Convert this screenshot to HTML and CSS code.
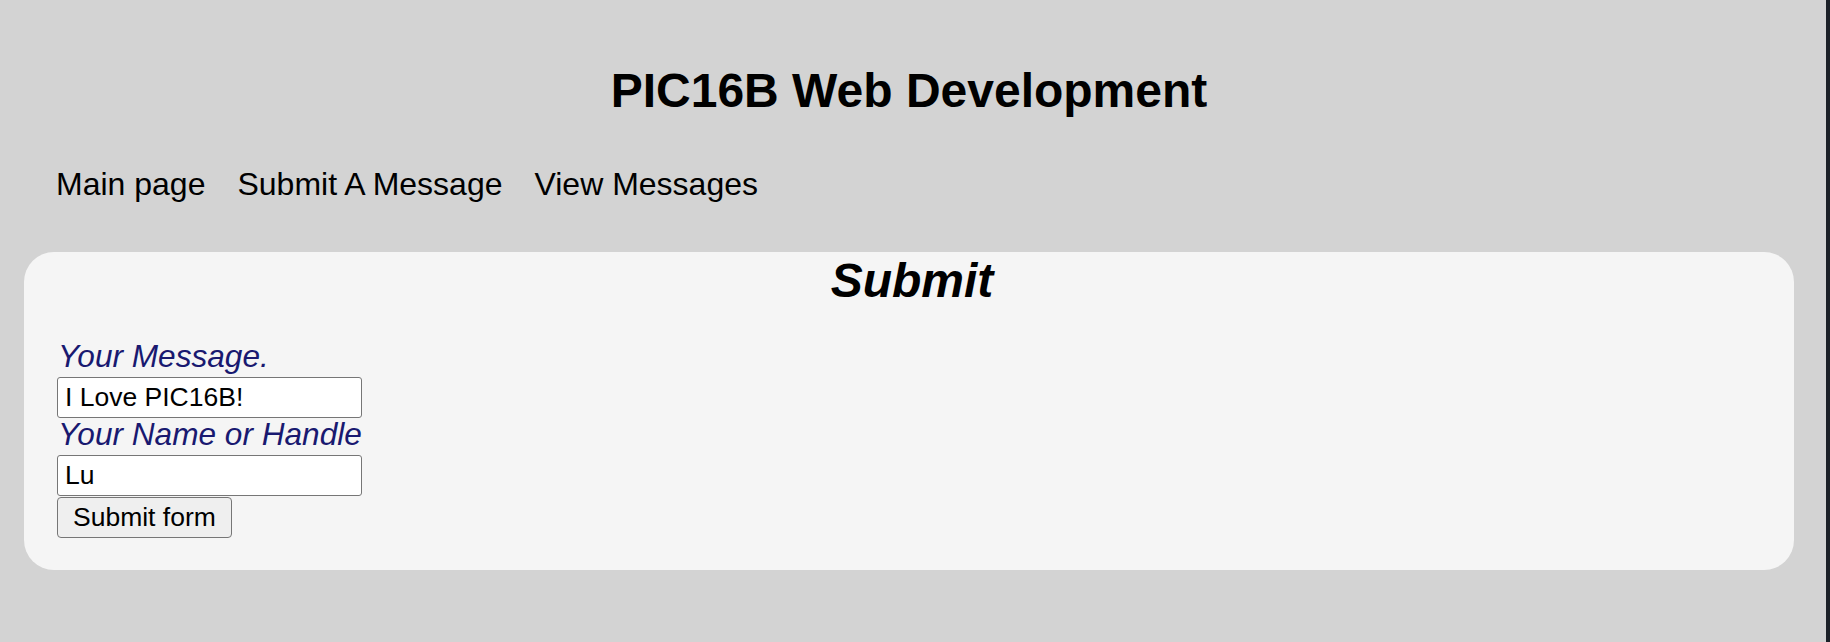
FILE: index.html
```html
<!DOCTYPE html>
<html lang="en">
<head>
<meta charset="utf-8">
<title>PIC16B Web Development</title>
<link rel="stylesheet" href="styles.css">
</head>
<body>
<main class="page">
  <h1 class="site-title">PIC16B Web Development</h1>
  <nav class="nav">
    <a class="nav-link" href="#">Main page</a>
    <a class="nav-link" href="#">Submit A Message</a>
    <a class="nav-link" href="#">View Messages</a>
  </nav>
  <section class="card">
    <h2 class="card-title">Submit</h2>
    <form class="form">
      <label class="field-label" for="message">Your Message.</label>
      <input class="text-input" id="message" type="text" value="I Love PIC16B!">
      <label class="field-label" for="handle">Your Name or Handle</label>
      <input class="text-input" id="handle" type="text" value="Lu">
      <button class="submit-btn" type="button">Submit form</button>
    </form>
  </section>
</main>
<div class="window-edge"></div>
</body>
</html>
```

FILE: styles.css
```css
html {
  background: #d3d3d3;
}
body {
  margin: 0;
  display: flex;
  min-height: 642px;
  font-family: "Liberation Sans", Arial, Helvetica, sans-serif;
  color: #000;
}
.page {
  flex: 1;
  padding: 63px 16px 0 8px;
}
.window-edge {
  width: 4px;
  background: #1b2028;
}
.site-title {
  margin: 0 0 48px;
  font-size: 48px;
  line-height: 55px;
  font-weight: bold;
  text-align: center;
}
.nav {
  display: flex;
  gap: 32px;
  padding-left: 48px;
  height: 37px;
  margin-bottom: 49px;
}
.nav-link {
  font-size: 32px;
  line-height: 37px;
  color: #000;
  text-decoration: none;
}
.card {
  margin: 0 16px 0 16px;
  background: #f5f5f5;
  border-radius: 30px;
  padding: 5px 33px 32px;
}
.card-title {
  margin: 0 0 35px;
  padding-left: 6px;
  font-size: 48px;
  line-height: 48px;
  font-weight: bold;
  font-style: italic;
  text-align: center;
}
.form {
  display: flex;
  flex-direction: column;
  align-items: flex-start;
}
.field-label {
  display: block;
  font-size: 31.6px;
  line-height: 32px;
  padding: 0 0 5px 1px;
  font-style: italic;
  color: #191970;
}
.text-input {
  box-sizing: border-box;
  width: 305px;
  height: 41px;
  margin: 0;
  padding: 0 7px;
  font-family: "Liberation Sans", Arial, Helvetica, sans-serif;
  font-size: 26.5px;
  color: #000;
  background: #fff;
  border: 1px solid #767676;
  border-radius: 3px;
}
.submit-btn {
  box-sizing: border-box;
  height: 41px;
  margin: 1px 0 0;
  padding: 0 15px;
  font-family: "Liberation Sans", Arial, Helvetica, sans-serif;
  font-size: 26.5px;
  color: #000;
  background: #efefef;
  border: 1px solid #767676;
  border-radius: 4px;
}
```
